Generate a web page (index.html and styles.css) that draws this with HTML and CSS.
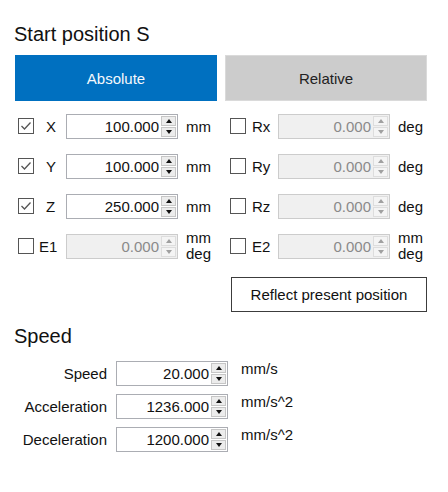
FILE: index.html
```html
<!DOCTYPE html>
<html lang="en">
<head>
    <meta charset="UTF-8">
    <meta name="viewport" content="width=device-width, initial-scale=1.0">
    <title>Start position</title>
    <link rel="stylesheet" href="styles.css">
</head>
<body>
    <div class="panel">
        <h2 class="heading">Start position S</h2>
        <div class="tabs">
            <button class="tab active">Absolute</button>
            <button class="tab">Relative</button>
        </div>

        <div class="axes">
            <div class="column">
                <div class="axis">
                    <span class="check"><svg viewBox="0 0 14 14"><path d="M2.5 7 L5.5 10 L11.5 3.5"/></svg></span>
                    <span class="axis-name">X</span>
                    <div class="spin"><span class="spin-value">100.000</span><span class="spin-btns"><span class="spin-btn"><i class="up"></i></span><span class="spin-btn"><i class="down"></i></span></span></div>
                    <span class="unit">mm</span>
                </div>
                <div class="axis">
                    <span class="check"><svg viewBox="0 0 14 14"><path d="M2.5 7 L5.5 10 L11.5 3.5"/></svg></span>
                    <span class="axis-name">Y</span>
                    <div class="spin"><span class="spin-value">100.000</span><span class="spin-btns"><span class="spin-btn"><i class="up"></i></span><span class="spin-btn"><i class="down"></i></span></span></div>
                    <span class="unit">mm</span>
                </div>
                <div class="axis">
                    <span class="check"><svg viewBox="0 0 14 14"><path d="M2.5 7 L5.5 10 L11.5 3.5"/></svg></span>
                    <span class="axis-name">Z</span>
                    <div class="spin"><span class="spin-value">250.000</span><span class="spin-btns"><span class="spin-btn"><i class="up"></i></span><span class="spin-btn"><i class="down"></i></span></span></div>
                    <span class="unit">mm</span>
                </div>
                <div class="axis">
                    <span class="check"></span>
                    <span class="axis-name short">E1</span>
                    <div class="spin disabled"><span class="spin-value">0.000</span><span class="spin-btns"><span class="spin-btn"><i class="up"></i></span><span class="spin-btn"><i class="down"></i></span></span></div>
                    <span class="unit two-line">mm<br>deg</span>
                </div>
            </div>
            <div class="column">
                <div class="axis">
                    <span class="check"></span>
                    <span class="axis-name right">Rx</span>
                    <div class="spin disabled"><span class="spin-value">0.000</span><span class="spin-btns"><span class="spin-btn"><i class="up"></i></span><span class="spin-btn"><i class="down"></i></span></span></div>
                    <span class="unit">deg</span>
                </div>
                <div class="axis">
                    <span class="check"></span>
                    <span class="axis-name right">Ry</span>
                    <div class="spin disabled"><span class="spin-value">0.000</span><span class="spin-btns"><span class="spin-btn"><i class="up"></i></span><span class="spin-btn"><i class="down"></i></span></span></div>
                    <span class="unit">deg</span>
                </div>
                <div class="axis">
                    <span class="check"></span>
                    <span class="axis-name right">Rz</span>
                    <div class="spin disabled"><span class="spin-value">0.000</span><span class="spin-btns"><span class="spin-btn"><i class="up"></i></span><span class="spin-btn"><i class="down"></i></span></span></div>
                    <span class="unit">deg</span>
                </div>
                <div class="axis">
                    <span class="check"></span>
                    <span class="axis-name right">E2</span>
                    <div class="spin disabled"><span class="spin-value">0.000</span><span class="spin-btns"><span class="spin-btn"><i class="up"></i></span><span class="spin-btn"><i class="down"></i></span></span></div>
                    <span class="unit two-line">mm<br>deg</span>
                </div>
            </div>
        </div>

        <div class="reflect-row">
            <button class="reflect">Reflect present position</button>
        </div>

        <h2 class="heading speed-heading">Speed</h2>
        <div class="speed-rows">
            <div class="speed-row">
                <span class="speed-label">Speed</span>
                <div class="spin"><span class="spin-value">20.000</span><span class="spin-btns"><span class="spin-btn"><i class="up"></i></span><span class="spin-btn"><i class="down"></i></span></span></div>
                <span class="speed-unit">mm/s</span>
            </div>
            <div class="speed-row">
                <span class="speed-label">Acceleration</span>
                <div class="spin"><span class="spin-value">1236.000</span><span class="spin-btns"><span class="spin-btn"><i class="up"></i></span><span class="spin-btn"><i class="down"></i></span></span></div>
                <span class="speed-unit">mm/s^2</span>
            </div>
            <div class="speed-row">
                <span class="speed-label">Deceleration</span>
                <div class="spin"><span class="spin-value">1200.000</span><span class="spin-btns"><span class="spin-btn"><i class="up"></i></span><span class="spin-btn"><i class="down"></i></span></span></div>
                <span class="speed-unit">mm/s^2</span>
            </div>
        </div>
    </div>
</body>
</html>
```

FILE: styles.css
```css
*{
    margin: 0;
    padding: 0;
    box-sizing: border-box;
}
body{
    background: #ffffff;
    font-family: "Liberation Sans", Arial, sans-serif;
    font-size: 15px;
    color: #111;
}
.panel{
    padding: 22px 21px 0 14px;
}
.heading{
    font-size: 20px;
    font-weight: normal;
    line-height: 24px;
    color: #111;
}
.tabs{
    display: grid;
    grid-template-columns: 202px 202px;
    gap: 8px;
    margin: 9px 0 0 1px;
}
.tab{
    height: 46px;
    border: none;
    font-family: inherit;
    font-size: 15px;
    background: #cccccc;
    color: #222;
    box-shadow: inset 0 0 0 1px #dadada;
}
.tab.active{
    background: #0070c0;
    color: #f4f8fc;
    box-shadow: none;
}
.axes{
    display: grid;
    grid-template-columns: 212px 1fr;
    margin: 5px 0 0 4px;
}
.axis{
    display: flex;
    align-items: center;
    height: 40px;
}
.check{
    width: 16px;
    height: 16px;
    border: 1px solid #555;
    background: #fff;
    flex-shrink: 0;
}
.check svg{
    display: block;
    width: 14px;
    height: 14px;
}
.check path{
    fill: none;
    stroke: #555;
    stroke-width: 1.3;
}
.axis-name{
    width: 32px;
    padding-left: 12px;
}
.axis-name.short{
    padding-left: 5px;
}
.axis-name.right{
    padding-left: 6px;
}
.spin{
    display: flex;
    width: 112px;
    height: 25px;
    border: 1px solid #abadb3;
    background: #fff;
}
.spin-value{
    flex: 1;
    text-align: right;
    padding-right: 2px;
    line-height: 23px;
}
.spin-btns{
    width: 16px;
    display: flex;
    flex-direction: column;
    gap: 1px;
    padding: 1px 1px 1px 0;
}
.spin-btn{
    flex: 1;
    display: flex;
    align-items: center;
    justify-content: center;
    background: #ececec;
    border: 1px solid #c6c6c6;
}
.spin-btn i{
    width: 0;
    height: 0;
    border-left: 3.5px solid transparent;
    border-right: 3.5px solid transparent;
}
.spin-btn .up{
    border-bottom: 4px solid #111;
}
.spin-btn .down{
    border-top: 4px solid #111;
}
.spin.disabled{
    background: #f0f0f0;
    border-color: #cccccc;
    color: #8a8a8a;
}
.spin.disabled .spin-btn{
    background: #f4f4f4;
    border-color: #dddddd;
}
.spin.disabled .up{
    border-bottom-color: #a0a0a0;
}
.spin.disabled .down{
    border-top-color: #a0a0a0;
}
.unit{
    margin-left: 8px;
}
.unit.two-line{
    line-height: 16px;
    text-align: center;
}
.reflect-row{
    display: flex;
    justify-content: flex-end;
    margin-top: 11px;
}
.reflect{
    width: 196px;
    height: 35px;
    background: #fff;
    border: 1px solid #3c3c3c;
    font-family: inherit;
    font-size: 15px;
    color: #111;
}
.speed-heading{
    margin-top: 12px;
}
.speed-rows{
    margin-top: 9px;
}
.speed-row{
    display: flex;
    align-items: center;
    height: 33px;
}
.speed-label{
    width: 93px;
    text-align: right;
}
.speed-row .spin{
    margin-left: 9px;
}
.speed-unit{
    margin-left: 13px;
    align-self: flex-start;
    margin-top: 3px;
}
```
